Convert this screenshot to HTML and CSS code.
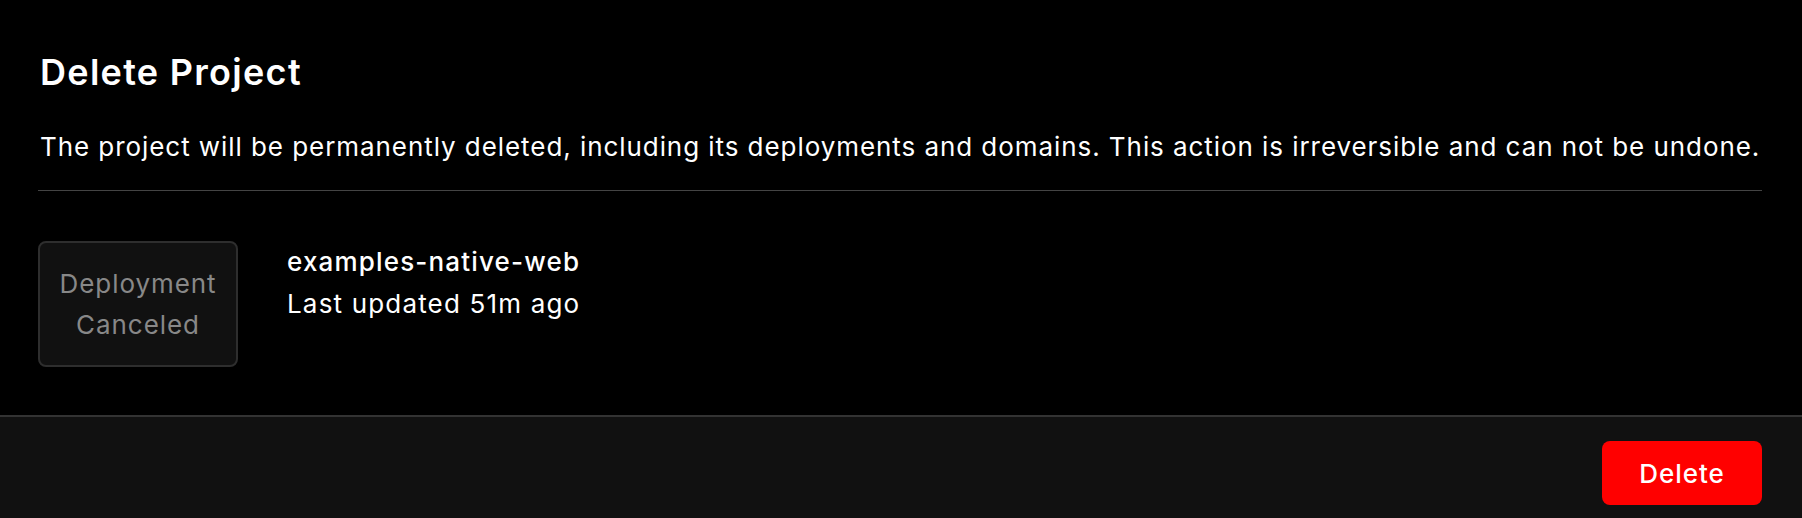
FILE: index.html
```html
<!DOCTYPE html>
<html lang="en">

<head>
  <meta charset="UTF-8">
  <meta name="viewport" content="width=device-width, initial-scale=1.0">
  <title>Delete Project</title>
  <link rel="stylesheet" href="styles.css">
</head>

<body>
  <div class="modal">
    <div class="modal-body">
      <h2 class="modal-title">Delete Project</h2>
      <p class="modal-desc">The project will be permanently deleted, including its deployments and domains. This action is irreversible and can not be undone.</p>

      <div class="project-row">
        <div class="preview">Deployment<br>Canceled</div>
        <div class="project-info">
          <div class="project-name">examples-native-web</div>
          <div class="project-meta">Last updated 51m ago</div>
        </div>
      </div>
    </div>

    <footer class="modal-footer">
      <button class="delete-btn">Delete</button>
    </footer>
  </div>
</body>

</html>
```

FILE: styles.css
```css
* {
  margin: 0;
  padding: 0;
  box-sizing: border-box;
  font-family: 'Inter', 'Noto Sans', sans-serif;
  letter-spacing: 0.036em;
}

body {
  background: #000;
  color: #fff;
}

.modal {
  width: 1802px;
  height: 518px;
  display: flex;
  flex-direction: column;
  overflow: hidden;
}

.modal-body {
  padding: 45px 40px 0 38px;
}

.modal-title {
  font-size: 36px;
  line-height: 54px;
  font-weight: 600;
  padding-left: 2px;
}

.modal-desc {
  margin-top: 27px;
  font-size: 26px;
  line-height: 42px;
  padding-left: 2px;
  padding-bottom: 22px;
  border-bottom: 1px solid #444;
}

.project-row {
  display: flex;
  align-items: flex-start;
  gap: 49px;
  padding: 50px 0 48px;
}

.preview {
  width: 200px;
  height: 126px;
  display: flex;
  align-items: center;
  justify-content: center;
  text-align: center;
  background: #111;
  border: 2px solid #2e2e2e;
  border-radius: 8px;
  color: #888;
  font-size: 26px;
  line-height: 41px;
}

.project-info {
  font-size: 26px;
  line-height: 42px;
}

.project-name,
.project-meta {
  letter-spacing: 0.045em;
}

.project-name {
  font-weight: 500;
}

.modal-footer {
  flex: 1;
  display: flex;
  justify-content: flex-end;
  align-items: flex-start;
  padding: 24px 40px;
  background: #111;
  border-top: 2px solid #333;
}

.delete-btn {
  width: 160px;
  height: 64px;
  background: #ff0000;
  color: white;
  border: none;
  border-radius: 8px;
  font-size: 26px;
  font-weight: 500;
  cursor: pointer;
}
```
